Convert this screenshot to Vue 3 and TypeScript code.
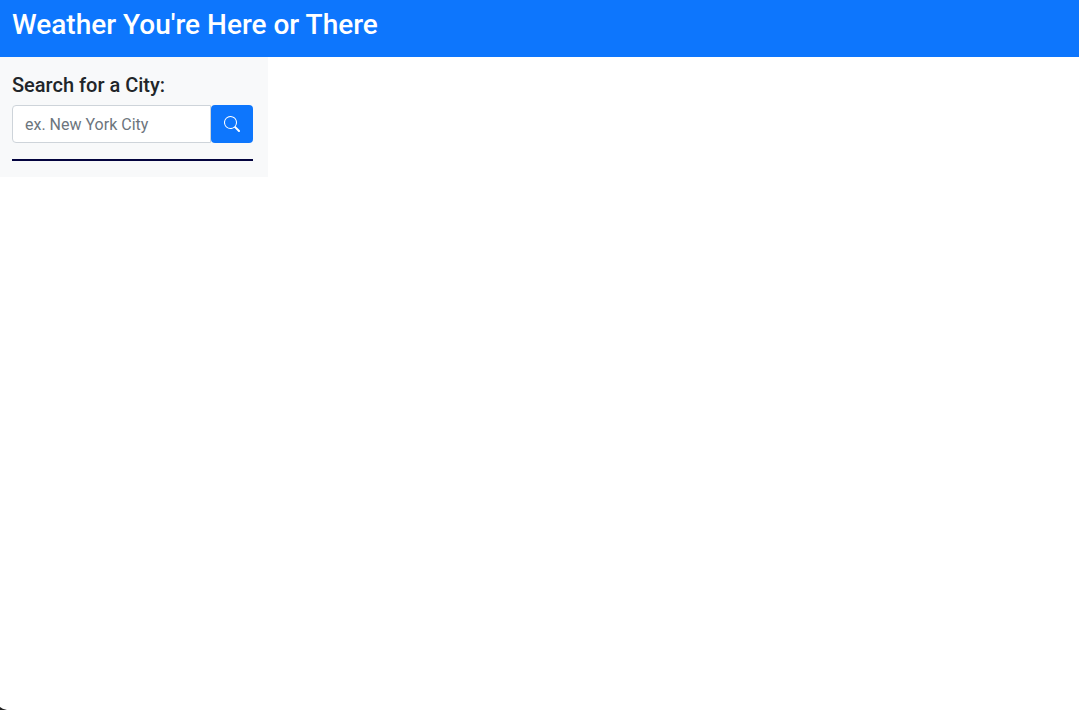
<script setup lang="ts">
import { ref } from 'vue'

const city = ref<string>('')
</script>

<template>
  <div class="page">
    <header class="header">
      <h1>Weather You're Here or There</h1>
    </header>
    <main class="layout">
      <aside class="sidebar">
        <form @submit.prevent>
          <label for="city">Search for a City:</label>
          <div class="group">
            <input id="city" v-model="city" type="text" placeholder="ex. New York City" autocomplete="off" />
            <button type="submit" aria-label="Search">
              <svg width="16" height="16" viewBox="0 0 16 16" fill="currentColor" aria-hidden="true">
                <path d="M11.742 10.344a6.5 6.5 0 1 0-1.397 1.398h-.001c.03.04.062.078.098.115l3.85 3.85a1 1 0 0 0 1.415-1.414l-3.85-3.85a1.007 1.007 0 0 0-.115-.1zM12 6.5a5.5 5.5 0 1 1-11 0 5.5 5.5 0 0 1 11 0z" />
              </svg>
            </button>
          </div>
        </form>
        <hr />
      </aside>
    </main>
    <svg class="corner" width="8" height="4" viewBox="0 0 8 4" aria-hidden="true">
      <path d="M0 1Q2 3 7 4H0Z" fill="#222" />
    </svg>
  </div>
</template>

<style>
body {
  margin: 0;
  background: #fff;
}
</style>

<style scoped>
.page {
  font-family: Roboto, "Liberation Sans", sans-serif;
  font-size: 16px;
  line-height: 24px;
  color: #212529;
}
.header {
  padding: 8px 12px 15px;
  background: #0d76fd;
  color: #fff;
}
h1 {
  margin: 0;
  font-size: 28px;
  line-height: 34px;
  font-weight: 500;
}
.layout {
  display: grid;
  grid-template-columns: minmax(0, 33fr) minmax(0, 100fr);
  align-items: start;
}
.sidebar {
  padding: 16px 15px 16px 12px;
  background: #f8f9fa;
}
label {
  display: block;
  margin-bottom: 8px;
  font-size: 20px;
  line-height: 24px;
  font-weight: 500;
}
.group {
  display: flex;
}
input {
  box-sizing: border-box;
  flex: 1;
  min-width: 0;
  height: 38px;
  padding: 6px 12px;
  border: 1px solid #ced4da;
  border-radius: 4px 0 0 4px;
  background: #fff;
  color: inherit;
  font: inherit;
}
input::placeholder {
  color: #6c757d;
  opacity: 1;
}
button {
  display: flex;
  align-items: center;
  justify-content: center;
  width: 42px;
  padding: 0;
  border: 0;
  border-radius: 4px;
  background: #0d76fd;
  color: #fff;
}
hr {
  height: 2px;
  margin: 16px 0 0;
  border: 0;
  background: #03033f;
}
.corner {
  position: fixed;
  left: 0;
  bottom: 0;
}
</style>
